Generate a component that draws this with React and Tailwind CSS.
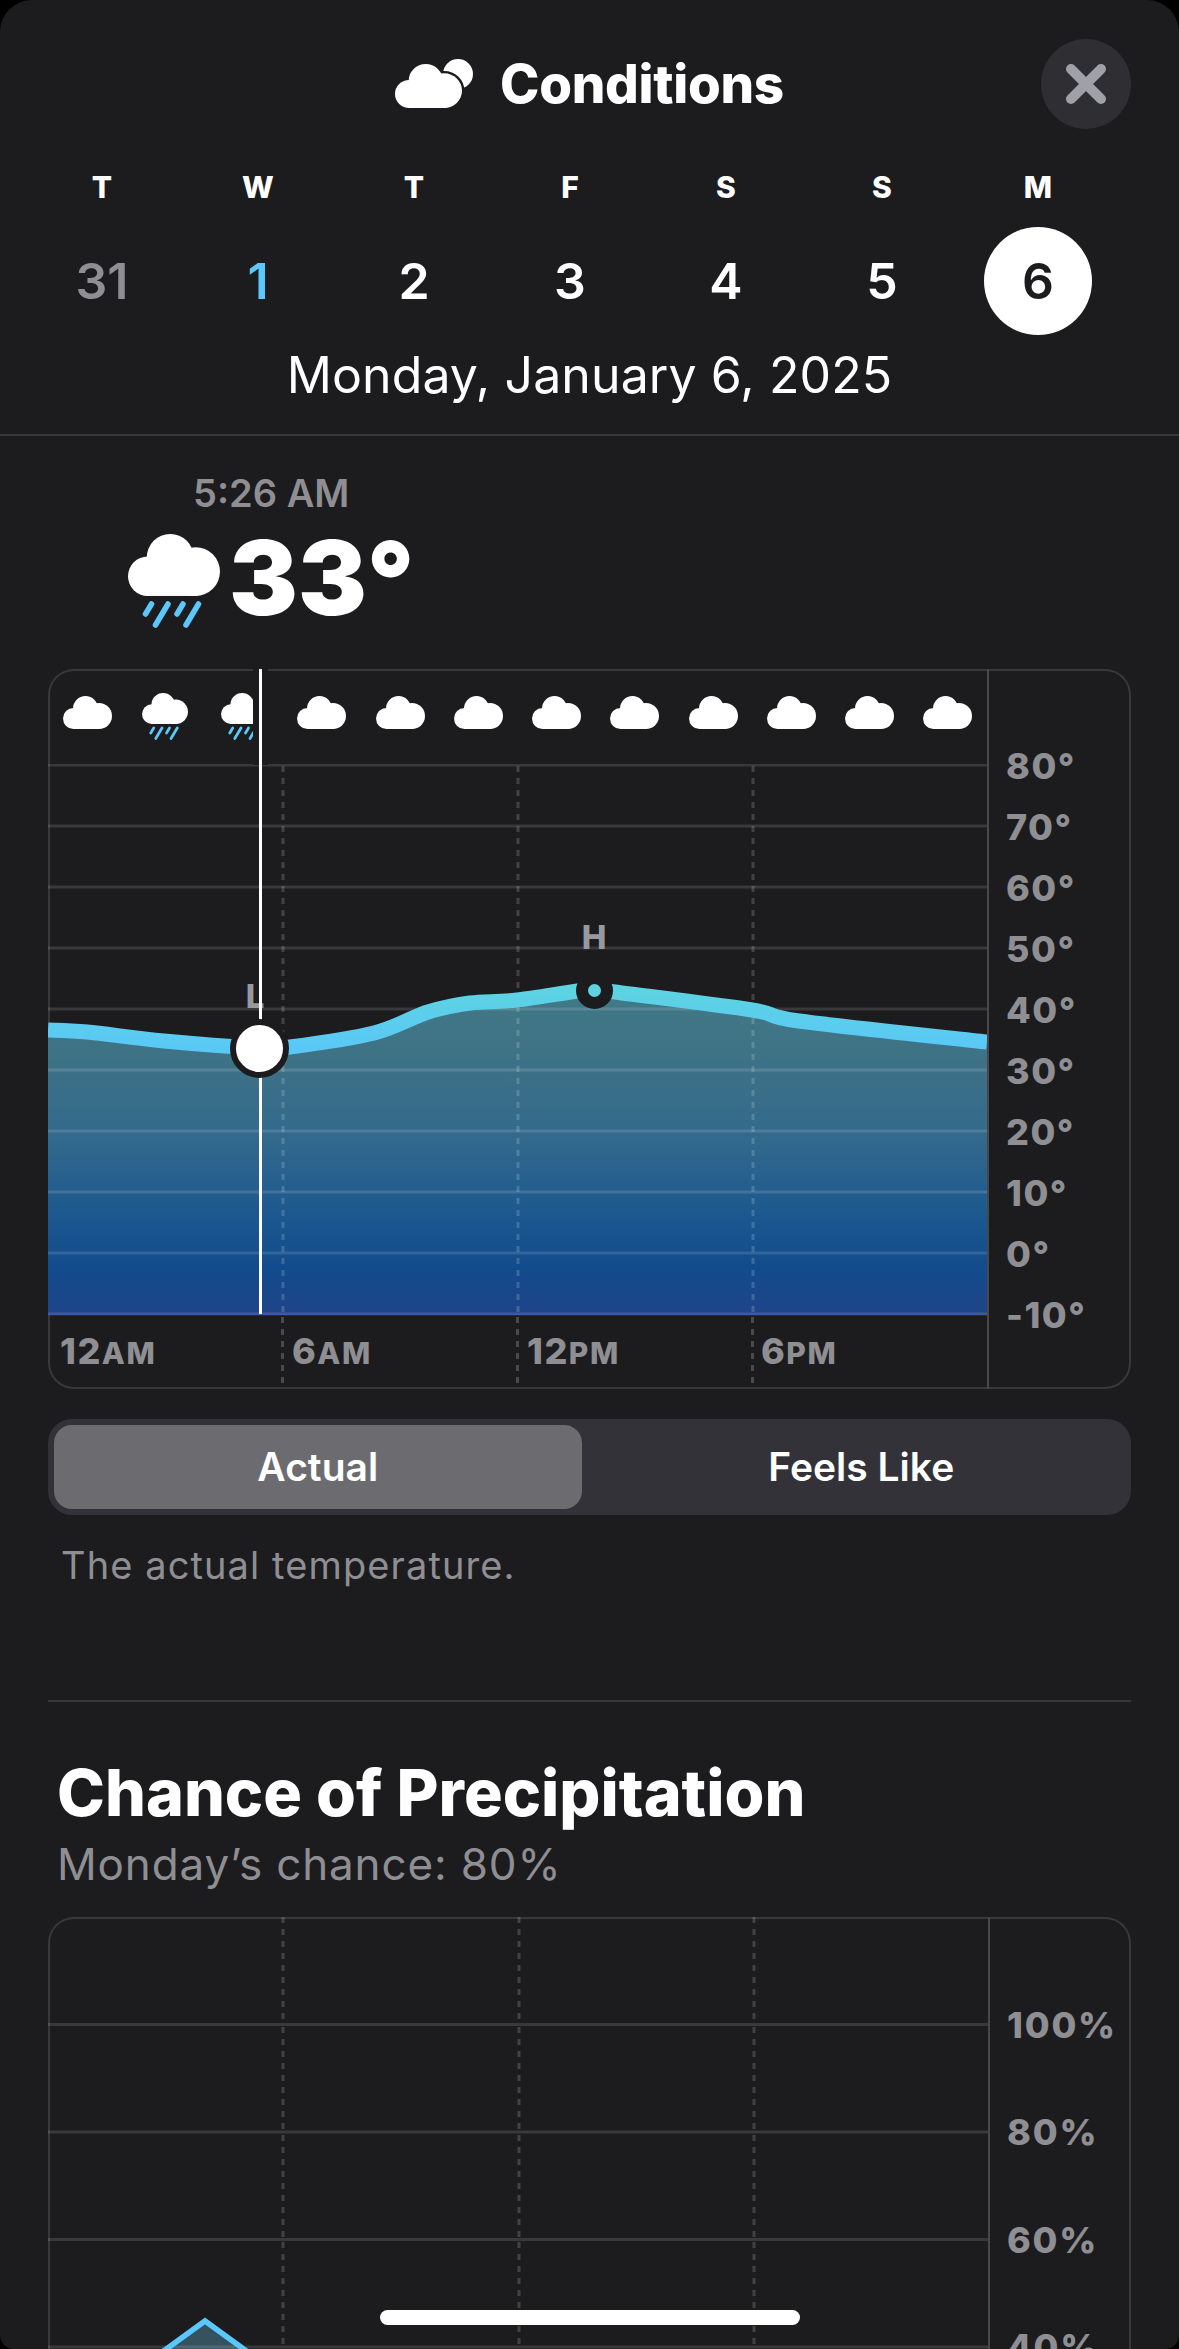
import React from 'react';

const days = [
  { letter: 'T', num: '31', cls: 'text-[#8e8e93]' },
  { letter: 'W', num: '1', cls: 'text-[#5ac8fa]' },
  { letter: 'T', num: '2', cls: 'text-white' },
  { letter: 'F', num: '3', cls: 'text-white' },
  { letter: 'S', num: '4', cls: 'text-white' },
  { letter: 'S', num: '5', cls: 'text-white' },
  { letter: 'M', num: '6', cls: 'text-[#1c1c1e] bg-white', active: true },
];

const tempLabels = ['80°', '70°', '60°', '50°', '40°', '30°', '20°', '10°', '0°', '-10°'];
const hourIcons = ['c', 'r', 'r', 'c', 'c', 'c', 'c', 'c', 'c', 'c', 'c', 'c'];
const hours = [
  { n: '12', s: 'AM', w: 'w-[236px] pl-[12px]' },
  { n: '6', s: 'AM', w: 'w-[235px] pl-2' },
  { n: '12', s: 'PM', w: 'w-[235px] pl-2' },
  { n: '6', s: 'PM', w: 'w-[233px] pl-[7px]', last: true },
];

// temperature curve, plot coordinates
const curve = [
  [0, 266], [39, 268], [116, 277], [211, 284], [242, 283], [326, 269], [380, 248],
  [422, 239], [469, 236], [546, 225], [567, 228], [704, 246], [751, 257], [939, 278],
];

function smoothPath(pts) {
  let d = `M${pts[0][0]} ${pts[0][1]}`;
  for (let i = 0; i < pts.length - 1; i++) {
    const p0 = pts[i - 1] || pts[i];
    const p1 = pts[i];
    const p2 = pts[i + 1];
    const p3 = pts[i + 2] || p2;
    const c1x = p1[0] + (p2[0] - p0[0]) / 6;
    const c1y = p1[1] + (p2[1] - p0[1]) / 6;
    const c2x = p2[0] - (p3[0] - p1[0]) / 6;
    const c2y = p2[1] - (p3[1] - p1[1]) / 6;
    d += ` C${c1x} ${c1y} ${c2x} ${c2y} ${p2[0]} ${p2[1]}`;
  }
  return d;
}

function CloudShapes({ fill = '#fff', stroke, strokeWidth }) {
  return (
    <g fill={fill} stroke={stroke} strokeWidth={strokeWidth}>
      <circle cx="10.5" cy="22.5" r="10.5" />
      <circle cx="22.5" cy="12.5" r="12.5" />
      <circle cx="36" cy="20" r="13" />
      <rect x="10" y="16" width="27" height="17" />
    </g>
  );
}

function Cloud({ className }) {
  return (
    <svg viewBox="0 0 49 33" className={className}>
      <CloudShapes />
    </svg>
  );
}

function RainCloud({ className }) {
  return (
    <svg viewBox="0 0 92 94" className={className}>
      <g transform="scale(1.877)">
        <CloudShapes />
      </g>
      <g stroke="#5ac8fa" strokeWidth="5.5" strokeLinecap="round">
        <line x1="23.5" y1="70" x2="17.5" y2="80" />
        <line x1="40" y1="70" x2="27.5" y2="91" />
        <line x1="55" y1="70" x2="49" y2="80" />
        <line x1="70.5" y1="70" x2="58" y2="91" />
      </g>
    </svg>
  );
}

function CloudMoon() {
  return (
    <svg viewBox="0 0 78 50" className="w-[78px] h-[50px]">
      <circle cx="63" cy="15" r="15" fill="#fff" />
      <g transform="translate(0 5) scale(1.367 1.333)">
        <CloudShapes fill="#1c1c1e" stroke="#1c1c1e" strokeWidth="3.5" />
        <CloudShapes />
      </g>
    </svg>
  );
}

function TempPlot() {
  const line = smoothPath(curve);
  const area = `${line} L939 551 L0 551 Z`;
  const rows = [1, 62, 123, 184, 245, 306, 367, 428, 489, 550];
  return (
    <svg viewBox="0 0 939 553" className="block w-[939px] h-[553px]">
      <defs>
        <linearGradient id="tempArea" gradientUnits="userSpaceOnUse" x1="0" y1="225" x2="0" y2="551">
          <stop offset="0" stopColor="#417a87" />
          <stop offset="0.2" stopColor="#3e7285" />
          <stop offset="0.45" stopColor="#336a8c" />
          <stop offset="0.72" stopColor="#1a568f" />
          <stop offset="0.86" stopColor="#124b8c" />
          <stop offset="1" stopColor="#204488" />
        </linearGradient>
        <linearGradient id="tempLine" gradientUnits="userSpaceOnUse" x1="0" y1="225" x2="0" y2="284">
          <stop offset="0" stopColor="#5dd3e2" />
          <stop offset="1" stopColor="#5ac8f6" />
        </linearGradient>
      </defs>
      <path d={area} fill="url(#tempArea)" />
      {rows.map(y => (
        <line key={y} x1="0" x2="939" y1={y} y2={y} stroke="#fff" strokeOpacity="0.13" strokeWidth="3" />
      ))}
      {[235, 470, 705].map(x => (
        <line key={x} x1={x} x2={x} y1="2" y2="551" stroke="#fff" strokeOpacity="0.17" strokeWidth="3" strokeDasharray="6 6" />
      ))}
      <path d={line} fill="none" stroke="url(#tempLine)" strokeWidth="15" />
    </svg>
  );
}

function PrecipPlot() {
  const bands = [[0, 106], [110, 213], [218, 320], [325, 428]];
  return (
    <svg viewBox="0 0 940 432" className="block w-[940px] h-[432px]">
      <path d="M88 454 L157 404 L226 454 Z" fill="#34535f" />
      {[107.5, 215, 322.5, 430].map(y => (
        <line key={y} x1="0" x2="940" y1={y} y2={y} stroke="#fff" strokeOpacity="0.13" strokeWidth="3" />
      ))}
      {[235, 471, 706].map(x =>
        bands.map(b => (
          <line key={b[0]} x1={x} x2={x} y1={b[0]} y2={b[1]} stroke="#fff" strokeOpacity="0.17" strokeWidth="3" strokeDasharray="6 6" />
        ))
      )}
      <path d="M88 454 L157 404 L226 454" fill="none" stroke="#5ac8fa" strokeWidth="5.5" />
    </svg>
  );
}

function Dash() {
  return (
    <svg viewBox="0 0 3 66" className="w-[3px] h-[66px] shrink-0">
      <line x1="1.5" x2="1.5" y1="0" y2="66" stroke="#fff" strokeOpacity="0.2" strokeWidth="3" strokeDasharray="6 6" />
    </svg>
  );
}

export default function App() {
  return (
    <div className="relative w-[1179px] h-[2349px] overflow-hidden bg-black font-['Inter',sans-serif]">
      <div className="h-full overflow-hidden rounded-t-[32px] rounded-b-[14px] bg-[#1c1c1e]">
        {/* header */}
        <div className="grid grid-cols-[1fr_auto_1fr] items-center pt-[39px] pr-[48px]">
          <div />
          <div className="flex items-center gap-[27px] pl-[48px]">
            <CloudMoon />
            <span className="text-[53px] leading-[56px] font-extrabold tracking-[-0.3px] text-white">Conditions</span>
          </div>
          <button className="justify-self-end flex items-center justify-center w-[90px] h-[90px] rounded-full bg-[#2f2f33]">
            <svg viewBox="0 0 40 40" className="w-[40px] h-[40px]">
              <path d="M5 5 L35 35 M35 5 L5 35" stroke="#a0a0a8" strokeWidth="10" strokeLinecap="round" />
            </svg>
          </button>
        </div>

        <div className="grid grid-cols-7 w-[1092px] ml-[24px] mt-[38px]">
          {days.map((d, i) => (
            <div key={i} className="flex flex-col items-center">
              <span className="text-[30px] leading-[40px] font-extrabold text-white">{d.letter}</span>
              <span className={`mt-[20px] flex items-center justify-center w-[108px] h-[108px] rounded-full text-[50px] font-semibold ${d.cls}`}>
                {d.num}
              </span>
            </div>
          ))}
        </div>

        <div className="mt-[10px] text-center text-[50px] leading-[60px] tracking-[0.1px] text-white">Monday, January 6, 2025</div>
        <div className="mt-[29px] h-[2px] bg-[#38383a]" />

        {/* temperature */}
        <div className="inline-flex flex-col items-center ml-[128px] pt-[33px]">
          <span className="text-[38px] leading-[48px] font-semibold text-[#8e8e93]">5:26 AM</span>
          <div className="flex items-center gap-[9px] h-[122px]">
            <RainCloud className="w-[92px] h-[94px] mt-[6px]" />
            <span className="text-[103px] leading-[122px] font-black text-white">33°</span>
          </div>
        </div>

        <div className="mx-[48px] mt-[30px]">
          <div className="relative flex h-[720px] overflow-hidden rounded-[26px] shadow-[inset_0_0_0_2px_#38383a]">
            <div className="w-[939px] shrink-0">
              <div className="grid grid-cols-12 h-[95px] justify-items-center">
                {hourIcons.map((t, i) =>
                  t === 'r' ? (
                    <div key={i} className="pt-[24px]"><RainCloud className="w-[46px] h-[47px]" /></div>
                  ) : (
                    <div key={i} className="pt-[27px]"><Cloud className="w-[49px] h-[33px]" /></div>
                  )
                )}
              </div>
              <TempPlot />
              <div className="flex h-[72px]">
                {hours.map(h => (
                  <div key={h.n + h.s} className={`flex justify-between items-start ${h.w}`}>
                    <span className="mt-[12px] leading-[44px] font-extrabold text-[36px] tracking-[1.5px] text-[#8e8e93]">
                      {h.n}<span className="text-[30px]">{h.s}</span>
                    </span>
                    {!h.last && <Dash />}
                  </div>
                ))}
              </div>
            </div>
            <div className="flex-1 border-l-2 border-[#48484a] pl-[17px] pt-[66px]">
              {tempLabels.map(t => (
                <div key={t} className="flex items-center h-[61px] text-[36px] font-extrabold tracking-[1.5px] text-[#8e8e93]">{t}</div>
              ))}
            </div>

            {/* scrubber and markers */}
            <span className="absolute left-[546px] top-[269px] -translate-x-1/2 -translate-y-1/2 text-[33px] font-extrabold text-[#98989f]">H</span>
            <span className="absolute left-[207px] top-[328px] -translate-x-1/2 -translate-y-1/2 text-[33px] font-extrabold text-[#98989f]">L</span>
            <div className="absolute left-[205px] top-0 w-[15px] h-[96px] bg-[#1c1c1e]" />
            <div className="absolute left-[211px] top-0 w-[3px] h-[645px] bg-white" />
            <div className="absolute left-[182px] top-[350px] w-[59px] h-[59px] rounded-full bg-white border-[6px] border-[#1c1c1e]" />
            <div className="absolute left-[528px] top-[303px] w-[37px] h-[37px] rounded-full bg-[#5dd3e2] border-[12px] border-[#1c1c1e]" />
          </div>

          <div className="flex gap-[16px] mt-[30px] h-[96px] p-[6px] rounded-[24px] bg-[#323238]">
            <div className="flex flex-1 items-center justify-center rounded-[18px] bg-[#6c6c70] text-[39px] font-semibold text-white">Actual</div>
            <div className="flex flex-1 items-center justify-center text-[39px] font-semibold text-white">Feels Like</div>
          </div>

          <p className="mt-[28px] ml-[13px] text-[38px] leading-[44px] tracking-[1.1px] text-[#8e8e93]">The actual temperature.</p>

          <div className="mt-[113px] h-[2px] bg-[#38383a]" />

          <h2 className="mt-[51px] ml-[9px] text-[64.5px] leading-[80px] font-extrabold text-white">Chance of Precipitation</h2>
          <p className="mt-[6px] ml-[9px] text-[44px] leading-[50px] tracking-[0.85px] text-[#8e8e93]">Monday’s chance: 80%</p>

          <div className="flex mt-[28px] h-[600px] overflow-hidden rounded-[26px] shadow-[inset_0_0_0_2px_#38383a]">
            <div className="w-[940px] shrink-0">
              <PrecipPlot />
            </div>
            <div className="flex-1 border-l-2 border-[#48484a] pl-[17px] pt-[54px]">
              {['100%', '80%', '60%', '40%'].map(t => (
                <div key={t} className="flex items-center h-[107.5px] text-[36px] font-extrabold tracking-[1.8px] text-[#8e8e93]">{t}</div>
              ))}
            </div>
          </div>
        </div>
      </div>

      {/* home indicator */}
      <div className="absolute left-[380px] top-[2310px] w-[420px] h-[15px] rounded-full bg-white" />
    </div>
  );
}
